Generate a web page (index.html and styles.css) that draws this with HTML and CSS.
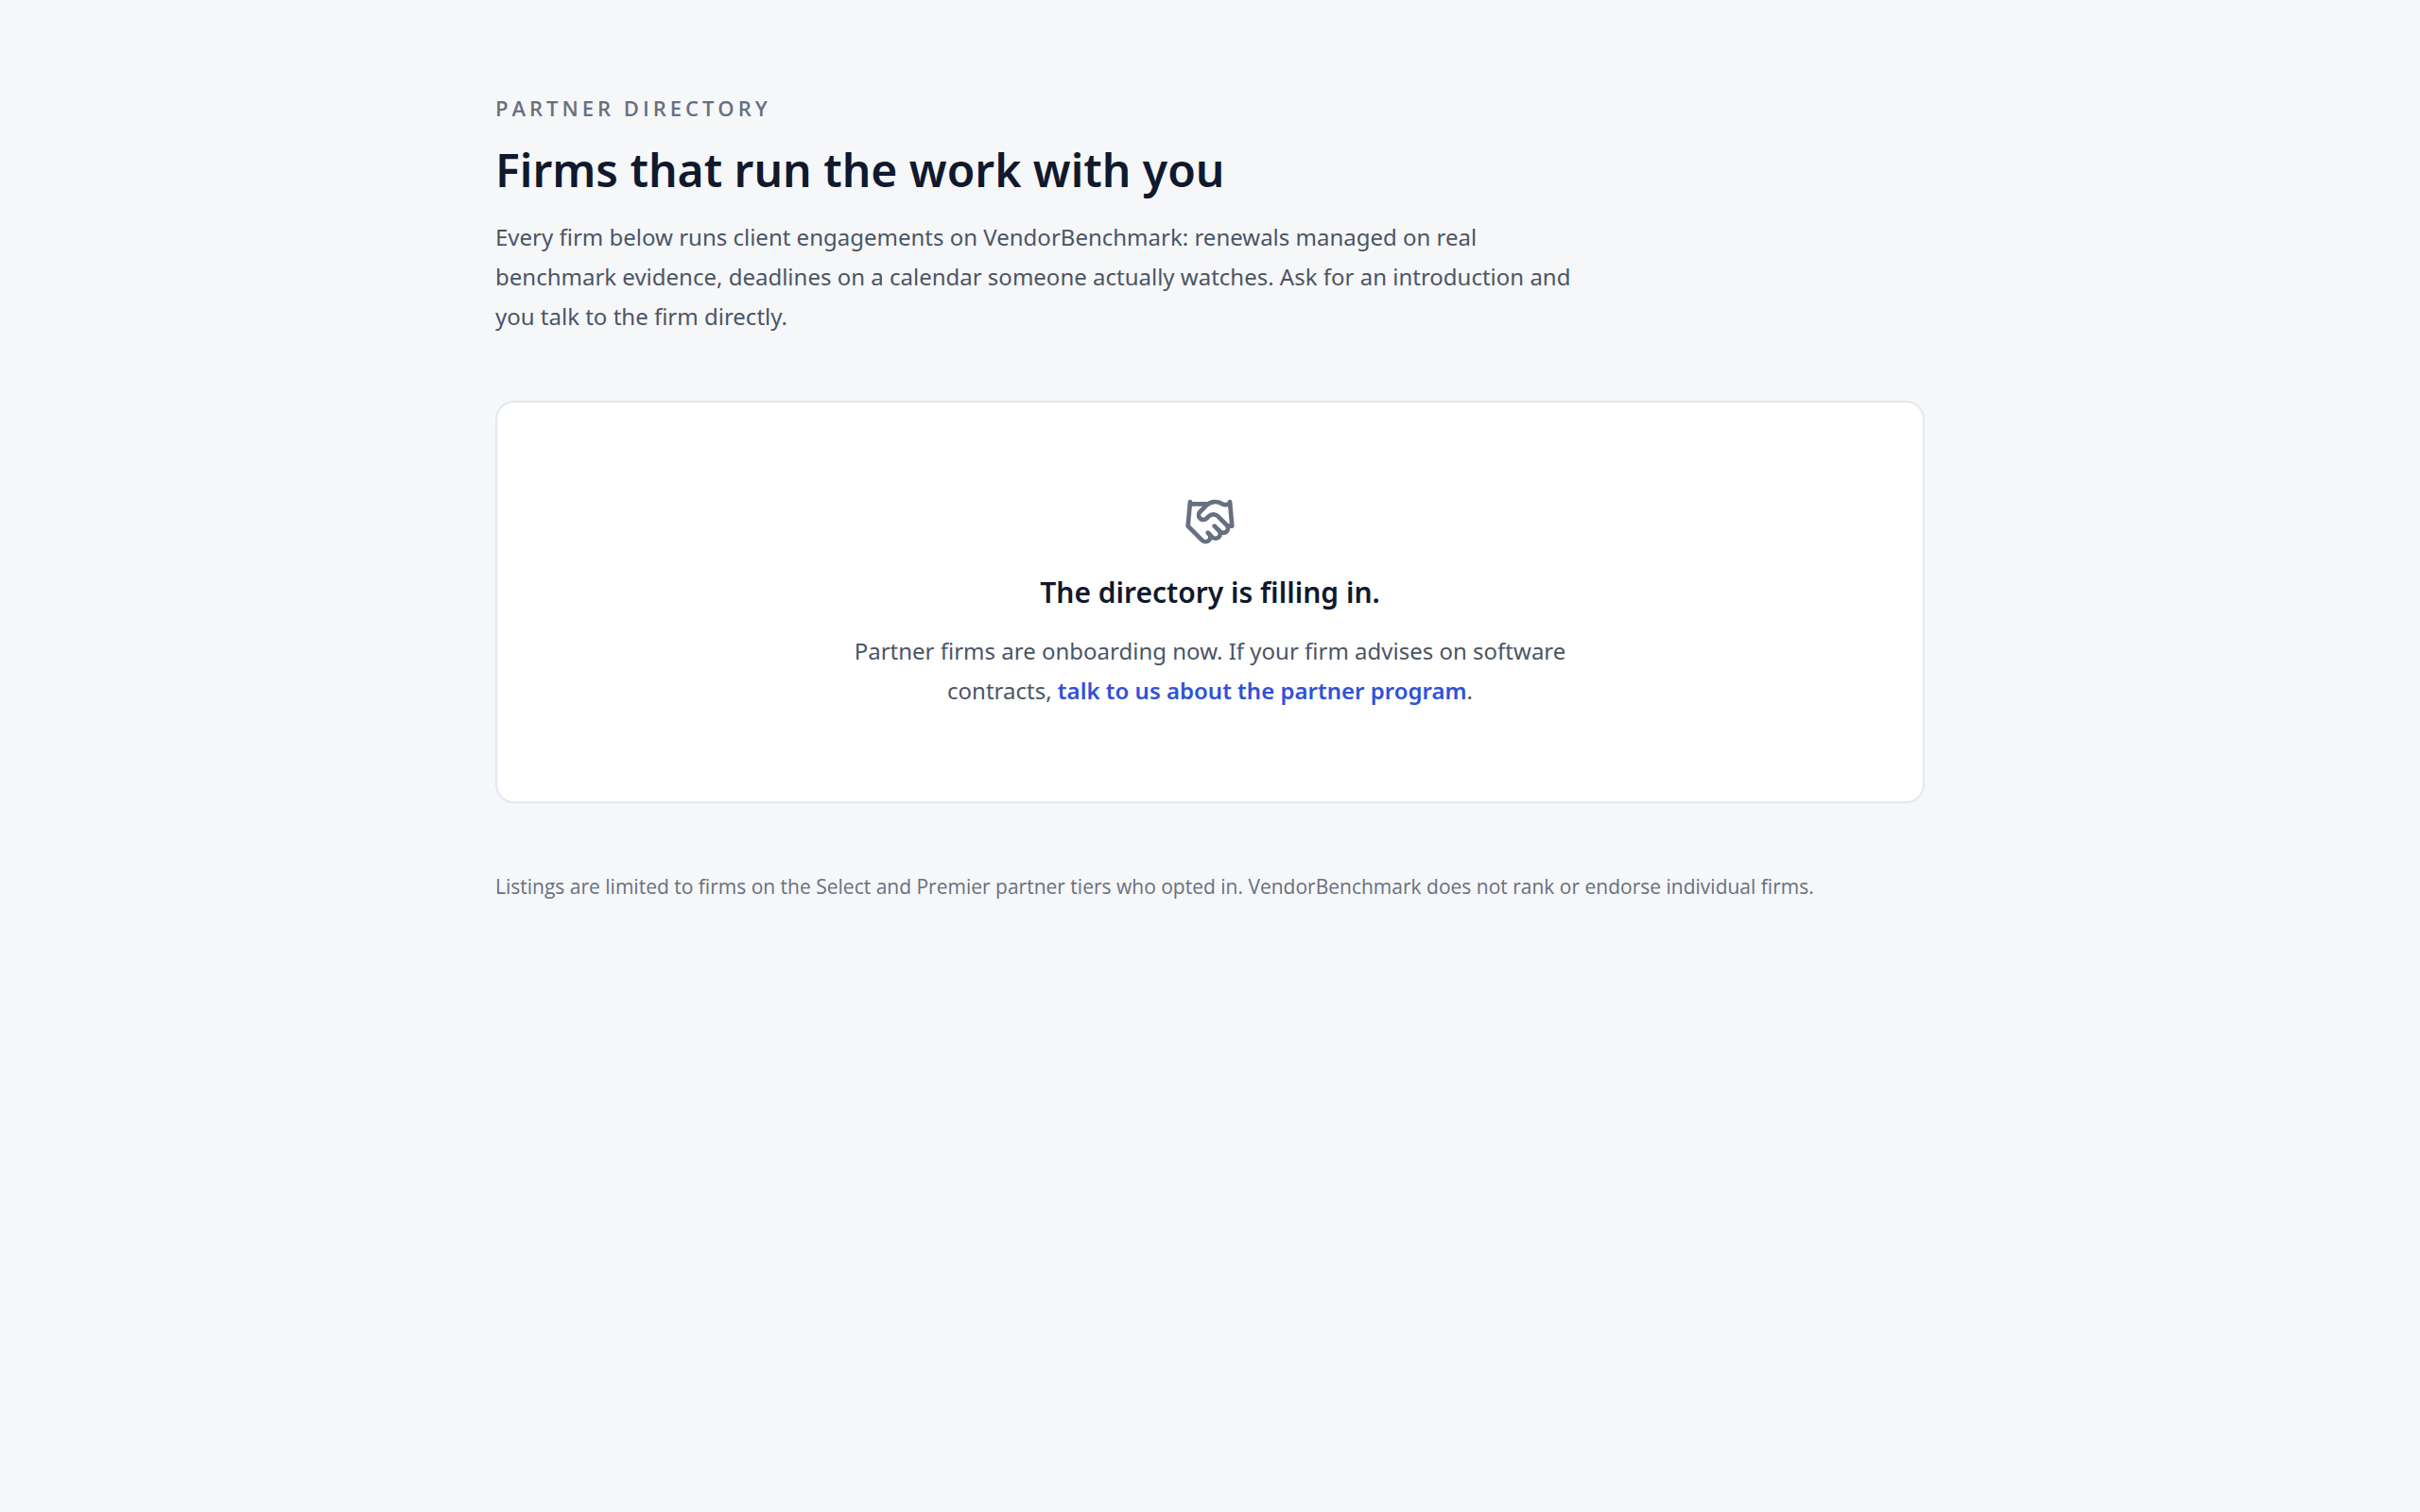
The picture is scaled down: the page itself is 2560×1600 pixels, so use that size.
FILE: index.html
```
<!DOCTYPE html>
<html lang="en">

<head>
  <meta charset="UTF-8">
  <meta name="viewport" content="width=device-width, initial-scale=1">
  <title>Partner directory</title>
  <link rel="stylesheet" href="styles.css">
</head>

<body>
  <main class="directory">
    <header class="intro">
      <p class="eyebrow">Partner directory</p>
      <h1>Firms that run the work with you</h1>
      <p class="lead">Every firm below runs client engagements on VendorBenchmark: renewals managed on real benchmark evidence, deadlines on a calendar someone actually watches. Ask for an introduction and you talk to the firm directly.</p>
    </header>

    <section class="empty">
      <svg class="empty-icon" viewBox="0 0 24 24" aria-hidden="true">
        <path d="m11 17 2 2a1 1 0 1 0 3-3"/>
        <path d="m14 14 2.5 2.5a1 1 0 1 0 3-3l-3.88-3.88a3 3 0 0 0-4.24 0l-.88.88a1 1 0 1 1-3-3l2.81-2.81a5.79 5.79 0 0 1 7.06-.87l.47.28a2 2 0 0 0 1.42.25L21 4"/>
        <path d="m21 3 1 11h-2"/>
        <path d="M3 3 2 14l6.5 6.5a1 1 0 1 0 3-3"/>
        <path d="M3 4h8"/>
      </svg>
      <h2>The directory is filling in.</h2>
      <p class="empty-text">Partner firms are onboarding now. If your firm advises on software contracts, <a href="#">talk to us about the partner program</a>.</p>
    </section>

    <p class="note">Listings are limited to firms on the Select and Premier partner tiers who opted in. VendorBenchmark does not rank or endorse individual firms.</p>
  </main>
</body>

</html>
```

FILE: styles.css
```
* {
  box-sizing: border-box;
}
body {
  margin: 0;
  background-color: #f6f7f9;
  color: #4b5565;
  font-family: "Segoe UI", "Noto Sans", "Open Sans", sans-serif;
  font-size: 24px;
  line-height: 42px;
}
h1, h2, p {
  margin: 0;
}
.directory {
  max-width: 1568px;
  margin: 0 auto;
  padding: 98px 28px;
}
.eyebrow {
  color: #677080;
  font-family: "Segoe UI", "Open Sans", "Noto Sans", sans-serif;
  font-size: 22px;
  font-weight: 600;
  line-height: 32px;
  letter-spacing: 4px;
  text-transform: uppercase;
}
h1 {
  margin-top: 18px;
  color: #10192d;
  font-size: 48px;
  font-weight: 600;
  line-height: 64px;
}
.lead {
  max-width: 1164px;
  margin-top: 18px;
}
.empty {
  display: flex;
  flex-direction: column;
  align-items: center;
  margin-top: 68px;
  padding: 98px 42px 96px;
  background-color: #fff;
  border: 2px solid #e2e8f0;
  border-radius: 20px;
  text-align: center;
}
.empty-icon {
  width: 56px;
  height: 56px;
  fill: none;
  stroke: #677080;
  stroke-width: 2;
  stroke-linecap: round;
  stroke-linejoin: round;
}
h2 {
  margin-top: 24px;
  color: #10192d;
  font-size: 30px;
  font-weight: 600;
  line-height: 46px;
}
.empty-text {
  max-width: 784px;
  margin-top: 18px;
}
.empty-text a {
  color: #2f52d9;
  font-weight: 600;
  text-decoration: none;
}
.note {
  margin-top: 70px;
  color: #677080;
  font-family: "Segoe UI", "Open Sans", "Noto Sans", sans-serif;
  font-size: 21px;
  line-height: 36px;
}
```
